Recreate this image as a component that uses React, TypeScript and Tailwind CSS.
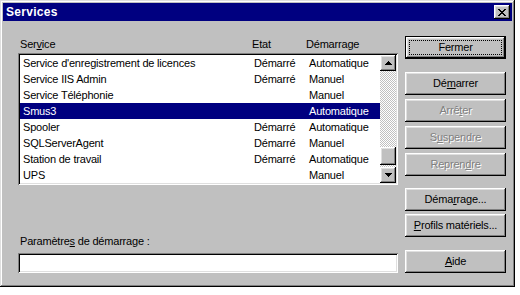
import type { ReactNode } from "react";

const raised =
  "shadow-[inset_-1px_-1px_0_#000,inset_1px_1px_0_#fff,inset_-2px_-2px_0_#808080,inset_2px_2px_0_#dfdfdf]";
const sunken =
  "shadow-[inset_1px_1px_0_#808080,inset_-1px_-1px_0_#fff,inset_2px_2px_0_#000,inset_-2px_-2px_0_#dfdfdf]";

type Service = { name: string; state: string; start: string };

const services: Service[] = [
  { name: "Service d'enregistrement de licences", state: "Démarré", start: "Automatique" },
  { name: "Service IIS Admin", state: "Démarré", start: "Manuel" },
  { name: "Service Téléphonie", state: "", start: "Manuel" },
  { name: "Smus3", state: "", start: "Automatique" },
  { name: "Spooler", state: "Démarré", start: "Automatique" },
  { name: "SQLServerAgent", state: "Démarré", start: "Manuel" },
  { name: "Station de travail", state: "Démarré", start: "Automatique" },
  { name: "UPS", state: "", start: "Manuel" },
];

export default function App() {
  return (
    <div className="font-['Liberation_Sans',Arial,sans-serif] text-[11px] leading-[13px] tracking-[-0.2px] text-black">
      <div className="flex h-[287px] w-[515px] flex-col bg-[#c0c0c0] p-[3px] shadow-[inset_-1px_-1px_0_#000,inset_1px_1px_0_#dfdfdf,inset_-2px_-2px_0_#808080,inset_2px_2px_0_#fff]">
        <div className="flex h-[18px] items-center justify-between bg-[#000080] pl-[3px] pr-[2px]">
          <span className="text-[12px] font-bold tracking-[0.3px] text-white">Services</span>
          <button className={`flex h-[14px] w-[16px] items-center justify-center bg-[#c0c0c0] ${raised}`}>
            <svg width="8" height="7" viewBox="0 0 8 7" shapeRendering="crispEdges">
              <path
                d="M0 0h2v1H0zM6 0h2v1H6zM1 1h2v1H1zM5 1h2v1H5zM2 2h4v1H2zM3 3h2v1H3zM2 4h4v1H2zM1 5h2v1H1zM5 5h2v1H5zM0 6h2v1H0zM6 6h2v1H6z"
                fill="#000"
              />
            </svg>
          </button>
        </div>

        <div className="flex pl-[15px] pt-[15px]">
          <div className="flex w-[380px] flex-col">
            <div className="flex h-[17px] pl-[2px] pt-[2px]">
              <span className="w-[232px]">
                Ser<u>v</u>ice
              </span>
              <span className="w-[54px]">Etat</span>
              <span>Démarrage</span>
            </div>

            <div className={`flex h-[132px] bg-white p-[2px] ${sunken}`}>
              <div className="flex w-[360px] flex-col">
                {services.map((s) => (
                  <ServiceRow key={s.name} service={s} selected={s.name === "Smus3"} />
                ))}
              </div>
              <div className="flex w-[16px] flex-col">
                <ScrollButton dir="up" />
                <div className="flex flex-1 flex-col justify-end bg-[repeating-conic-gradient(#c0c0c0_0_25%,#fff_0_50%)] bg-[length:2px_2px] pb-[2px]">
                  <div className={`h-[18px] bg-[#c0c0c0] ${raised}`} />
                </div>
                <ScrollButton dir="down" />
              </div>
            </div>

            <label className="mt-[50px] pl-[2px]">
              Paramètre<u>s</u> de démarrage :
            </label>
            <div className={`mt-[5px] h-[20px] bg-white ${sunken}`} />
          </div>

          <div className="ml-[7px] flex w-[101px] flex-col">
            <div className="h-[23px] border border-black">
              <div className={`flex h-full items-center justify-center p-[3px] ${raised}`}>
                <div className="flex h-full w-full items-center justify-center border border-dotted border-black">
                  Fermer
                </div>
              </div>
            </div>
            <DlgButton className="mt-[13px]">
              Dé<u>m</u>arrer
            </DlgButton>
            <DlgButton className="mt-[4px]" disabled>
              Arrê<u>t</u>er
            </DlgButton>
            <DlgButton className="mt-[4px]" disabled>
              S<u>u</u>spendre
            </DlgButton>
            <DlgButton className="mt-[4px]" disabled>
              Repren<u>d</u>re
            </DlgButton>
            <DlgButton className="mt-[12px]">
              Déma<u>r</u>rage...
            </DlgButton>
            <DlgButton className="mt-[3px]">
              <u>P</u>rofils matériels...
            </DlgButton>
            <DlgButton className="mt-[13px]">
              <u>A</u>ide
            </DlgButton>
          </div>
        </div>
      </div>
    </div>
  );
}

function ServiceRow({ service, selected }: { service: Service; selected: boolean }) {
  return (
    <div
      className={`flex h-[16px] items-center whitespace-nowrap pl-[3px] leading-[16px] ${
        selected ? "bg-[#000080] text-white" : ""
      }`}
    >
      <span className="w-[231px]">{service.name}</span>
      <span className="w-[55px]">{service.state}</span>
      <span>{service.start}</span>
    </div>
  );
}

function ScrollButton({ dir }: { dir: "up" | "down" }) {
  return (
    <div className={`flex h-[16px] w-[16px] items-center justify-center bg-[#c0c0c0] ${raised}`}>
      <svg width="7" height="4" viewBox="0 0 7 4" shapeRendering="crispEdges">
        {dir === "up" ? (
          <path d="M3 0h1v1H3zM2 1h3v1H2zM1 2h5v1H1zM0 3h7v1H0z" fill="#000" />
        ) : (
          <path d="M0 0h7v1H0zM1 1h5v1H1zM2 2h3v1H2zM3 3h1v1H3z" fill="#000" />
        )}
      </svg>
    </div>
  );
}

function DlgButton({
  children,
  disabled,
  className,
}: {
  children: ReactNode;
  disabled?: boolean;
  className?: string;
}) {
  return (
    <div
      className={`flex h-[23px] items-center justify-center bg-[#c0c0c0] ${raised} ${
        disabled ? "text-[#808080] [text-shadow:1px_1px_0_#fff]" : ""
      } ${className ?? ""}`}
    >
      <span>{children}</span>
    </div>
  );
}
